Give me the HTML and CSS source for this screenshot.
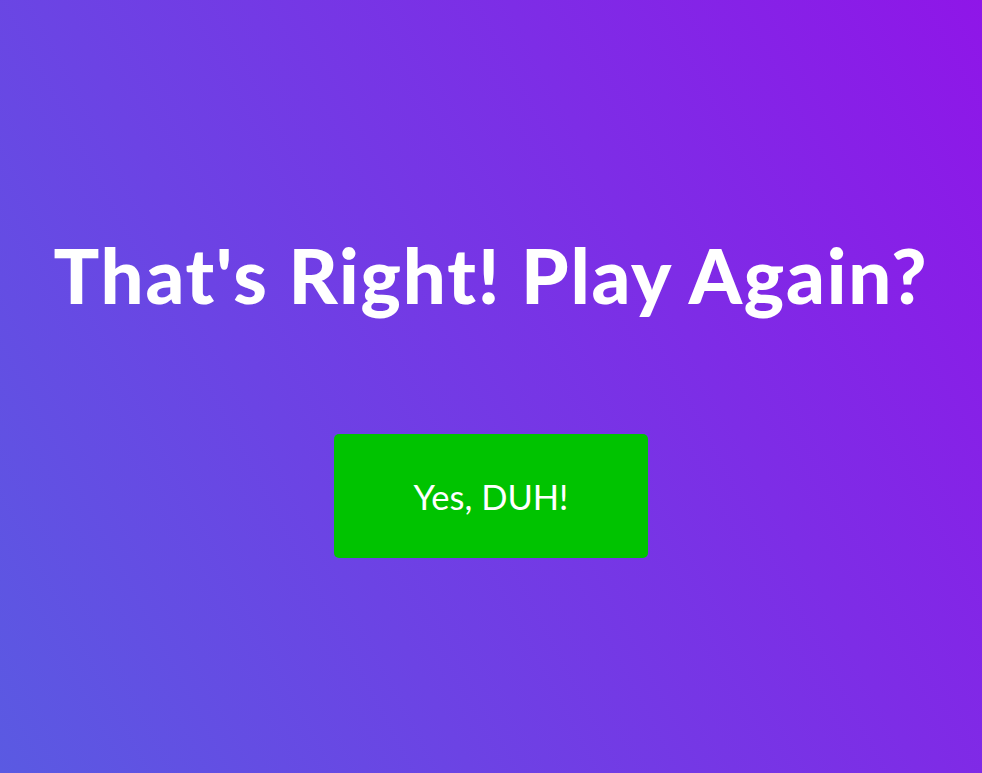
FILE: index.html
```html
<!DOCTYPE html>
<html>
<head>
<meta charset="utf-8">
<link rel="stylesheet" href="styles.css">
</head>
<body>
<main class="screen">
  <h1 class="title">That's Right! Play Again?</h1>
  <button class="btn">Yes, DUH!</button>
</main>
</body>
</html>
```
FILE: styles.css
```css
html, body {
  margin: 0;
  padding: 0;
  height: 100%;
}
body {
  font-family: Lato, "Open Sans", sans-serif;
}
.screen {
  height: 773px;
  box-sizing: border-box;
  background: linear-gradient(62deg, #5a5ae2 0%, #8f16e8 100%);
  display: flex;
  flex-direction: column;
  align-items: center;
  padding-top: 220px;
}
.title {
  margin: 0;
  color: #fff;
  font-weight: 900;
  font-size: 76px;
  line-height: 110px;
  letter-spacing: 1.8px;
}
.btn {
  margin-top: 104px;
  width: 314px;
  height: 124px;
  border: none;
  border-radius: 5px;
  background: #00c300;
  color: #fff;
  font-family: Lato, "Open Sans", sans-serif;
  font-size: 34.5px;
  font-weight: 400;
  padding: 0;
}
```
